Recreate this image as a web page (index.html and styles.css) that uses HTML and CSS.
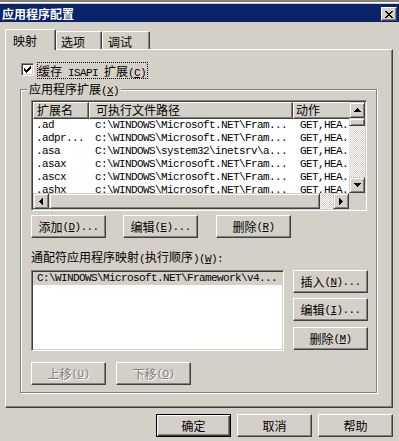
FILE: index.html
```html
<!DOCTYPE html>
<html lang="zh-CN">
<head>
<meta charset="utf-8">
<title>应用程序配置</title>
<link rel="stylesheet" href="styles.css">
</head>
<body>
<div class="frame-top"></div>
<div class="titlebar">
  <span class="title">应用程序配置</span>
  <button class="close" aria-label="关闭"><svg width="8" height="7" viewBox="0 0 8 7"><path d="M0 0h2v1h1v1h2V1h1V0h2v1H7v1H6v1H5v1h1v1h1v1h1v1H6V6H5V5H3v1H2v1H0V6h1V5h1V4h1V3H2V2H1V1H0z" fill="#000"/></svg></button>
</div>
<div class="tabs">
  <div class="tab active">映射</div>
  <div class="tab t2">选项</div>
  <div class="tab t3">调试</div>
</div>
<div class="panel">
  <div class="check-row">
    <span class="checkbox"><svg width="7" height="7" viewBox="0 0 7 7"><path d="M6 0h1v3H6zM5 1h1v3H5zM4 2h1v3H4zM3 3h1v3H3zM2 4h1v3H2zM1 3h1v3H1zM0 2h1v3H0z" fill="#000"/></svg></span>
    <span class="check-label">缓存<span class="hw"> ISAPI </span>扩展<span class="hw">(<u>C</u>)</span></span>
  </div>
  <div class="group">
    <div class="group-title">应用程序扩展<span class="hw">(<u>X</u>)</span></div>
    <div class="listview">
      <div class="lv-main">
        <div class="lv-header">
          <div class="hd c1">扩展名</div>
          <div class="hd c2">可执行文件路径</div>
          <div class="hd c3">动作</div>
        </div>
        <div class="lv-row"><span class="c1">.ad</span><span class="c2">c:\WINDOWS\Microsoft.NET\Fram...</span><span class="c3">GET,HEA..</span></div>
        <div class="lv-row"><span class="c1">.adpr...</span><span class="c2">c:\WINDOWS\Microsoft.NET\Fram...</span><span class="c3">GET,HEA..</span></div>
        <div class="lv-row"><span class="c1">.asa</span><span class="c2">C:\WINDOWS\system32\inetsrv\a...</span><span class="c3">GET,HEA..</span></div>
        <div class="lv-row"><span class="c1">.asax</span><span class="c2">c:\WINDOWS\Microsoft.NET\Fram...</span><span class="c3">GET,HEA..</span></div>
        <div class="lv-row"><span class="c1">.ascx</span><span class="c2">c:\WINDOWS\Microsoft.NET\Fram...</span><span class="c3">GET,HEA..</span></div>
        <div class="lv-row"><span class="c1">.ashx</span><span class="c2">c:\WINDOWS\Microsoft.NET\Fram...</span><span class="c3">GET,HEA..</span></div>
      </div>
      <div class="vscroll">
        <div class="sb-btn"><svg width="7" height="4" viewBox="0 0 7 4"><path d="M3 0h1v1h1v1h1v1h1v1H0V3h1V2h1V1h1z" fill="#000"/></svg></div>
        <div class="sb-thumb-v"></div>
        <div class="sb-track"></div>
        <div class="sb-btn"><svg width="7" height="4" viewBox="0 0 7 4"><path d="M0 0h7v1H6v1H5v1H4v1H3V3H2V2H1V1H0z" fill="#000"/></svg></div>
      </div>
      <div class="hscroll">
        <div class="sb-btn"><svg width="4" height="7" viewBox="0 0 4 7"><path d="M3 0h1v7H3V6H2V5H1V4H0V3h1V2h1V1h1z" fill="#000"/></svg></div>
        <div class="sb-thumb-h"></div>
        <div class="sb-track"></div>
        <div class="sb-btn"><svg width="4" height="7" viewBox="0 0 4 7"><path d="M0 0h1v1h1v1h1v1h1v1H3v1H2v1H1v1H0z" fill="#000"/></svg></div>
      </div>
      <div class="corner"></div>
    </div>
    <div class="btn-row">
      <button class="btn">添加<span class="hw">(<u>D</u>)...</span></button>
      <button class="btn">编辑<span class="hw">(<u>E</u>)...</span></button>
      <button class="btn third">删除<span class="hw">(<u>R</u>)</span></button>
    </div>
    <div class="label">通配符应用程序映射<span class="hw">(</span>执行顺序<span class="hw">)(<u>W</u>):</span></div>
    <div class="wild-row">
      <div class="listbox">
        <div class="lb-item sel">C:\WINDOWS\Microsoft.NET\Framework\v4...</div>
      </div>
      <div class="side-btns">
        <button class="btn">插入<span class="hw">(<u>N</u>)...</span></button>
        <button class="btn">编辑<span class="hw">(<u>I</u>)...</span></button>
        <button class="btn last">删除<span class="hw">(<u>M</u>)</span></button>
      </div>
    </div>
    <div class="move-row">
      <button class="btn disabled">上移<span class="hw">(<u>U</u>)</span></button>
      <button class="btn disabled">下移<span class="hw">(<u>O</u>)</span></button>
    </div>
  </div>
</div>
<div class="footer">
  <button class="btn default">确定</button>
  <button class="btn">取消</button>
  <button class="btn">帮助</button>
</div>
</body>
</html>
```
FILE: styles.css
```css
* { box-sizing: border-box; }
html, body { margin: 0; padding: 0; }
body {
  width: 399px;
  height: 441px;
  overflow: hidden;
  background: #d4d0c8;
  font-family: "Noto Sans CJK SC", "Liberation Sans", sans-serif;
  font-size: 12px;
  color: #000;
}
u { text-decoration: underline; text-underline-offset: 1px; }
.hw {
  font-family: "Liberation Mono", monospace;
  font-size: 11px;
  letter-spacing: -0.6px;
  white-space: pre;
}

.frame-top {
  height: 4px;
  background: #fff;
  border-top: 2px solid #808080;
  border-bottom: 1px solid #d4d0c8;
}
.titlebar {
  height: 18px;
  background: #0a246a;
  display: flex;
  align-items: flex-start;
}
.title {
  color: #fff;
  font-weight: bold;
  margin: 2px 0 0 2px;
  line-height: 15px;
}
.close {
  appearance: none;
  margin: 3px 2px 0 auto;
  width: 16px;
  height: 14px;
  padding: 0;
  background: #d4d0c8;
  border: 1px solid;
  border-color: #fff #404040 #404040 #fff;
  box-shadow: inset -1px -1px #808080;
  display: flex;
  align-items: center;
  justify-content: center;
}
.close svg { display: block; margin-left: -1px; }

.tabs {
  height: 27px;
  display: flex;
  align-items: flex-end;
  padding-left: 5px;
}
.tab {
  height: 18px;
  background: #d4d0c8;
  border-top: 1px solid #fff;
  border-left: 1px solid #fff;
  border-right: 1px solid #404040;
  border-radius: 2px 2px 0 0;
  box-shadow: inset -1px 0 #808080;
  line-height: 14px;
  padding-top: 3px;
}
.tab.active {
  position: relative;
  z-index: 1;
  height: 21px;
  width: 51px;
  margin-bottom: -1px;
  padding-left: 7px;
  padding-top: 4px;
}
.tab.t2 { width: 46px; padding-left: 4px; }
.tab.t3 { width: 48px; padding-left: 5px; }

.panel {
  margin-left: 5px;
  width: 388px;
  height: 359px;
  border: 1px solid;
  border-color: #fff #404040 #404040 #fff;
  box-shadow: inset -1px -1px #808080;
}
.check-row {
  margin: 12px 0 0 15px;
  height: 17px;
  display: flex;
  align-items: flex-start;
}
.checkbox {
  width: 13px;
  height: 13px;
  margin-top: 1px;
  background: #fff;
  border: 1px solid;
  border-color: #808080 #fff #fff #808080;
  box-shadow: inset 1px 1px #404040, inset -1px -1px #d4d0c8;
  display: flex;
  align-items: center;
  justify-content: center;
}
.checkbox svg { display: block; }
.check-label {
  margin-left: 3px;
  height: 17px;
  border: 1px dotted #000;
  line-height: 15px;
  padding: 0 1px 0 0;
}

.group {
  margin: 10px 0 0 14px;
  width: 357px;
  border: 1px solid #808080;
  box-shadow: inset 1px 1px #fff, 1px 1px #fff;
  padding: 0 0 7px 10px;
}
.group-title {
  width: max-content;
  margin: -8px 0 0 -4px;
  padding: 0 2px;
  background: #d4d0c8;
  line-height: 14px;
  height: 14px;
}

.listview {
  margin-top: 4px;
  width: 336px;
  height: 111px;
  background: #fff;
  border: 1px solid;
  border-color: #808080 #fff #fff #808080;
  box-shadow: inset 1px 1px #404040, inset -1px -1px #d4d0c8;
  padding: 1px;
  display: grid;
  grid-template-columns: 1fr 16px;
  grid-template-rows: 1fr 16px;
}
.lv-main { overflow: hidden; background: #fff; min-width: 0; }
.lv-header { display: flex; height: 17px; }
.hd {
  flex: none;
  height: 17px;
  background: #d4d0c8;
  border: 1px solid;
  border-color: #fff #404040 #404040 #fff;
  box-shadow: inset -1px -1px #808080;
  line-height: 14px;
  white-space: nowrap;
  overflow: hidden;
}
.hd.c1 { width: 56px; padding-left: 3px; }
.hd.c2 { width: 204px; padding-left: 6px; }
.hd.c3 { width: 80px; padding-left: 2px; }
.lv-row {
  display: flex;
  height: 13px;
  line-height: 13px;
  font-family: "Liberation Mono", monospace;
  font-size: 11px;
  letter-spacing: -0.6px;
  white-space: nowrap;
}
.lv-row span { flex: none; overflow: hidden; }
.lv-row .c1 { width: 56px; padding-left: 3px; }
.lv-row .c2 { width: 204px; padding-left: 6px; }
.lv-row .c3 { width: 56px; padding-left: 7px; }

.vscroll { display: flex; flex-direction: column; }
.hscroll { display: flex; }
.sb-btn {
  flex: none;
  width: 16px;
  height: 16px;
  background: #d4d0c8;
  border: 1px solid;
  border-color: #d4d0c8 #404040 #404040 #d4d0c8;
  box-shadow: inset 1px 1px #fff, inset -1px -1px #808080;
  display: flex;
  align-items: center;
  justify-content: center;
}
.sb-btn svg { display: block; }
.sb-thumb-v, .sb-thumb-h {
  flex: none;
  background: #d4d0c8;
  border: 1px solid;
  border-color: #d4d0c8 #404040 #404040 #d4d0c8;
  box-shadow: inset 1px 1px #fff, inset -1px -1px #808080;
}
.sb-thumb-v { height: 8px; width: 16px; }
.sb-thumb-h { width: 271px; height: 16px; }
.sb-track {
  flex: 1;
  background: repeating-conic-gradient(#fff 0 25%, #d4d0c8 0 50%) 0 0 / 2px 2px;
}
.corner { background: #d4d0c8; }

.btn {
  appearance: none;
  font: inherit;
  color: #000;
  width: 75px;
  height: 23px;
  padding: 0;
  background: #d4d0c8;
  border: 1px solid;
  border-color: #fff #404040 #404040 #fff;
  box-shadow: inset -1px -1px #808080;
  line-height: 14px;
  display: flex;
  align-items: center;
  justify-content: center;
  white-space: nowrap;
}
.btn.default {
  border: 1px solid #000;
  box-shadow: inset 1px 1px #fff, inset -1px -1px #404040, inset -2px -2px #808080;
}
.btn.disabled {
  color: #808080;
  text-shadow: 1px 1px 0 #fff;
}

.btn-row {
  margin-top: 4px;
  display: flex;
  gap: 17px;
}
.btn-row .third { margin-left: 1px; }
.label {
  margin-top: 12px;
  line-height: 14px;
  height: 14px;
}
.wild-row {
  margin-top: 6px;
  display: flex;
  gap: 9px;
}
.listbox {
  width: 253px;
  height: 81px;
  background: #fff;
  border: 1px solid;
  border-color: #808080 #fff #fff #808080;
  box-shadow: inset 1px 1px #404040, inset -1px -1px #d4d0c8;
  padding: 1px;
}
.lb-item {
  height: 13px;
  line-height: 13px;
  padding-left: 4px;
  font-family: "Liberation Mono", monospace;
  font-size: 11px;
  letter-spacing: -0.6px;
  white-space: nowrap;
  overflow: hidden;
}
.lb-item.sel { background: #d4d0c8; }
.side-btns { display: flex; flex-direction: column; gap: 5px; }
.side-btns .last { margin-top: 1px; }
.move-row {
  margin-top: 11px;
  display: flex;
  gap: 10px;
}

.footer {
  margin-top: 6px;
  padding-right: 6px;
  display: flex;
  justify-content: flex-end;
  gap: 6px;
}
```
